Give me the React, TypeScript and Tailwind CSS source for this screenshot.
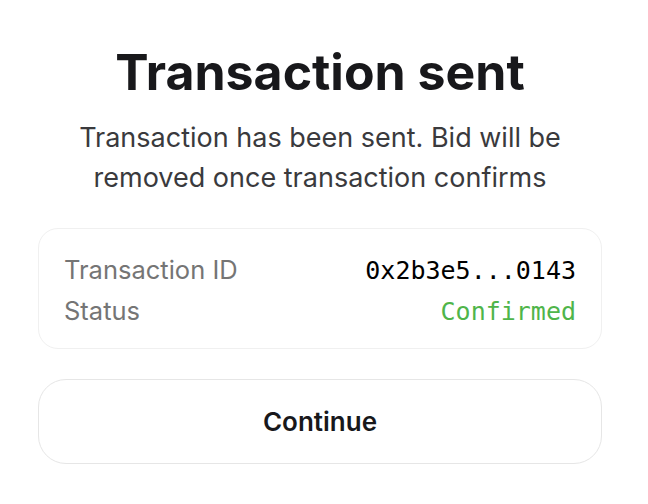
const mono = { fontFamily: '"DejaVu Sans Mono", "Liberation Mono", monospace' }

export default function App() {
  return (
    <div
      className="w-[648px] h-[504px] bg-white pl-[38px] pr-[46px] pt-[42px] flex flex-col items-center"
      style={{ fontFamily: 'Inter, "Noto Sans", sans-serif' }}
    >
      <h1 className="text-[50px] leading-[60px] font-bold text-[#18181b]">Transaction sent</h1>
      <p className="mt-[16px] text-center text-[27px] leading-[40px] text-[#3a3a3d] max-w-[520px]">
        Transaction has been sent. Bid will be removed once transaction confirms
      </p>
      <div className="mt-[30px] w-full rounded-[20px] border border-[#f0f0f0] px-[25px] pt-[20px] pb-[17px] flex flex-col">
        <div className="flex items-baseline justify-between h-[41px] leading-[41px]">
          <span className="text-[25.5px] text-[#757575]">Transaction ID</span>
          <span className="text-[25px] text-black" style={mono}>
            0x2b3e5...0143
          </span>
        </div>
        <div className="flex items-baseline justify-between h-[41px] leading-[41px]">
          <span className="text-[25.5px] text-[#757575]">Status</span>
          <span className="text-[25px] text-[#4fb54a]" style={mono}>
            Confirmed
          </span>
        </div>
      </div>
      <button className="mt-[30px] w-full h-[85px] rounded-[28px] border border-[#e6e6e6] bg-white text-[26px] font-semibold text-[#18181b]">
        Continue
      </button>
    </div>
  )
}
